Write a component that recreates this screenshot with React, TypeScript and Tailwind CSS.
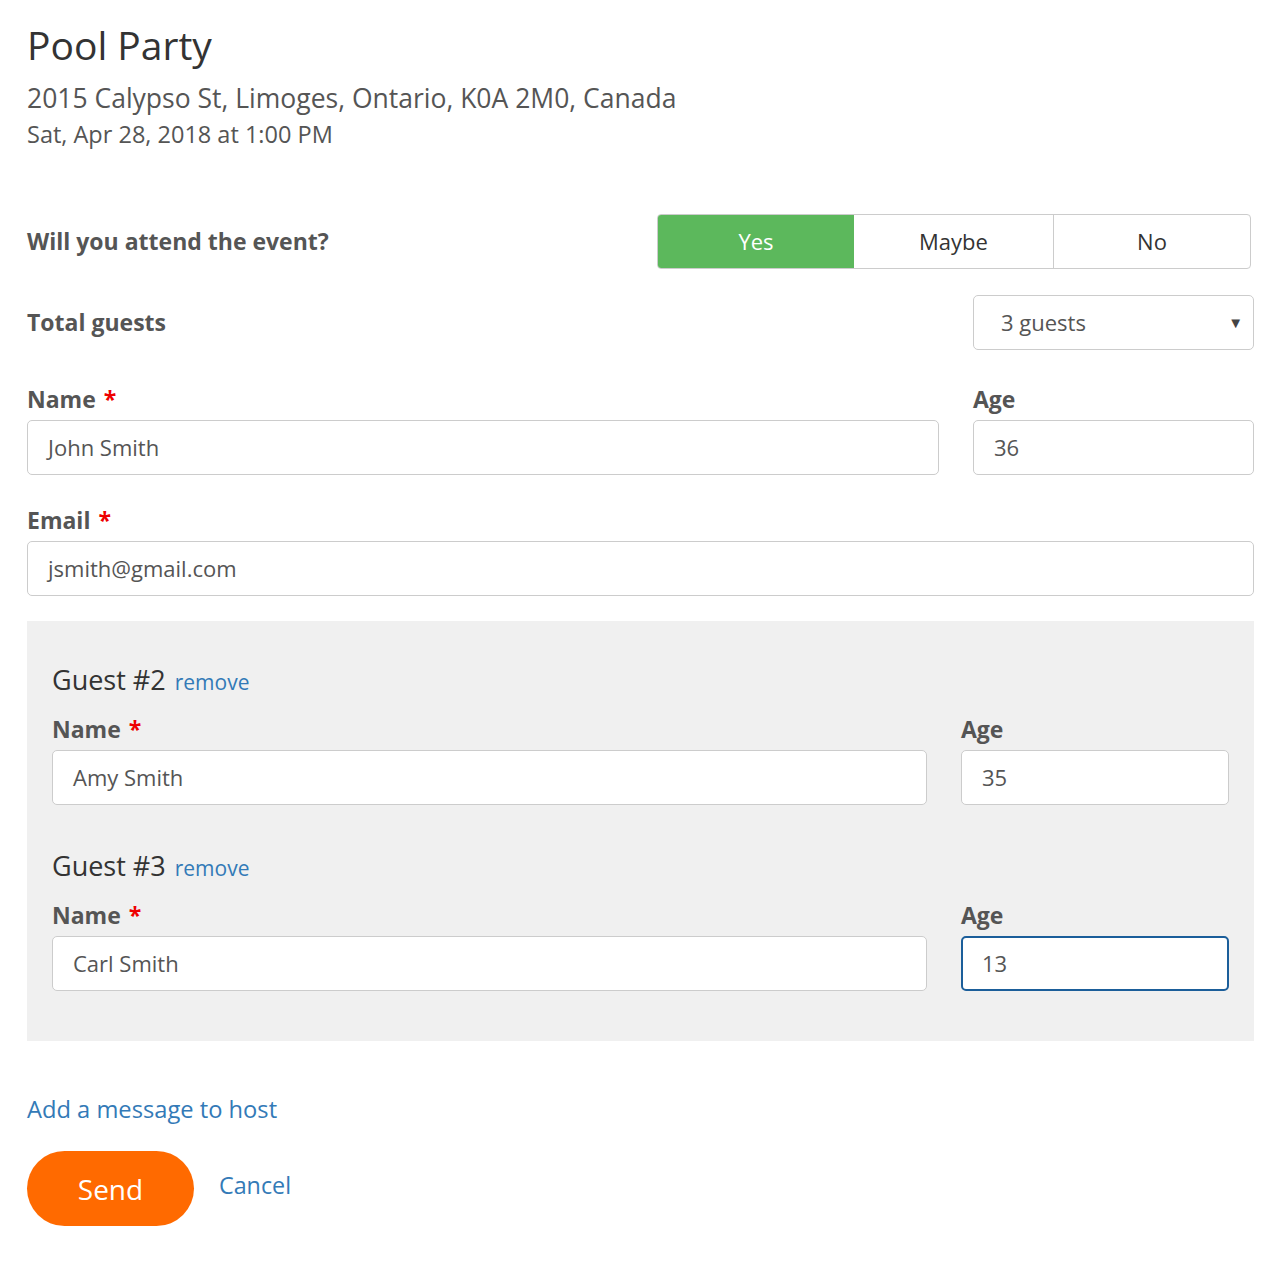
import React from "react";

const font = { fontFamily: '"Open Sans", "Noto Sans", sans-serif' };

function Label({ text, required }: { text: string; required?: boolean }) {
  return (
    <div className="text-[23px] font-bold leading-[30px] text-[#555] mb-[6px]">
      {text}
      {required && <span className="text-[#e00] ml-[8px]">*</span>}
    </div>
  );
}

function Field({ value, focused }: { value: string; focused?: boolean }) {
  return (
    <div
      className={
        "h-[55px] rounded-[5px] bg-white flex items-center text-[22px] text-[#555] " +
        (focused ? "border-2 border-[#1b5e9a] px-[19px]" : "border border-[#ccc] px-[20px]")
      }
    >
      {value}
    </div>
  );
}

function GuestBlock({ n, name, age, focused }: { n: number; name: string; age: string; focused?: boolean }) {
  return (
    <div>
      <div className="flex items-baseline gap-[9px] leading-[36px]">
        <span className="text-[27px] text-[#333]">Guest #{n}</span>
        <span className="text-[21px] text-[#337ab7]">remove</span>
      </div>
      <div className="flex gap-[34px] mt-[14px]">
        <div className="flex-1">
          <Label text="Name" required />
          <Field value={name} />
        </div>
        <div className="w-[268px]">
          <Label text="Age" />
          <Field value={age} focused={focused} />
        </div>
      </div>
    </div>
  );
}

export default function App() {
  return (
    <div className="bg-white min-h-[1264px] pl-[27px] pr-[26px] pt-[18px]" style={font}>
      <h1 className="text-[39px] leading-[54px] text-[#333]">Pool Party</h1>
      <div className="text-[26.5px] leading-[36px] text-[#555] mt-[8px]">
        2015 Calypso St, Limoges, Ontario, K0A 2M0, Canada
      </div>
      <div className="text-[23.5px] leading-[32px] text-[#555] mt-[2px]">Sat, Apr 28, 2018 at 1:00 PM</div>

      <div className="flex items-center justify-between mt-[64px]">
        <div className="text-[23px] font-bold text-[#555]">Will you attend the event?</div>
        <div className="flex w-[594px] h-[55px] mr-[3px] rounded-[4px] border border-[#ccc] overflow-hidden text-[22px]">
          <div className="w-[196px] bg-[#5cb85c] text-white flex items-center justify-center">Yes</div>
          <div className="flex-1 flex items-center justify-center text-[#333] border-r border-[#ccc]">Maybe</div>
          <div className="w-[196px] flex items-center justify-center text-[#333]">No</div>
        </div>
      </div>

      <div className="flex items-center justify-between mt-[26px]">
        <div className="text-[23px] font-bold text-[#555]">Total guests</div>
        <div className="w-[281px] h-[55px] rounded-[5px] border border-[#ccc] flex items-center justify-between pl-[27px] pr-[10px] text-[22px] text-[#555]">
          <span>3 guests</span>
          <span className="text-[15px] text-[#444]">▼</span>
        </div>
      </div>

      <div className="flex gap-[34px] mt-[34px]">
        <div className="flex-1">
          <Label text="Name" required />
          <Field value="John Smith" />
        </div>
        <div className="w-[281px]">
          <Label text="Age" />
          <Field value="36" />
        </div>
      </div>

      <div className="mt-[30px]">
        <Label text="Email" required />
        <Field value="jsmith@gmail.com" />
      </div>

      <div className="bg-[#f0f0f0] mt-[25px] px-[25px] pt-[41px] pb-[50px] flex flex-col gap-[43px]">
        <GuestBlock n={2} name="Amy Smith" age="35" />
        <GuestBlock n={3} name="Carl Smith" age="13" focused />
      </div>

      <div className="text-[23.7px] text-[#337ab7] mt-[52px] leading-[32px]">Add a message to host</div>

      <div className="flex items-center gap-[25px] mt-[26px]">
        <div className="w-[167px] h-[75px] rounded-full bg-[#ff6a00] text-white text-[28px] flex items-center justify-center">
          Send
        </div>
        <div className="text-[23.3px] text-[#337ab7] -mt-[6px]">Cancel</div>
      </div>
    </div>
  );
}
